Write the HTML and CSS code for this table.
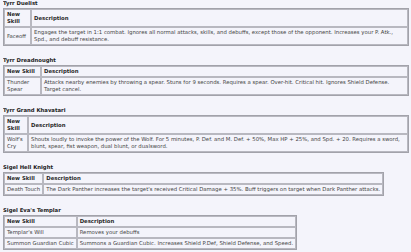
FILE: index.html
```html
<!DOCTYPE html>
<html lang="en">
<head>
<meta charset="utf-8">
<title>Skills</title>
<link rel="stylesheet" href="styles.css">
</head>
<body>
<section class="sec">
  <h3 class="title">Tyrr Duelist</h3>
  <table class="skills full">
    <tr><th class="c1 w27">New Skill</th><th>Description</th></tr>
    <tr><td>Faceoff</td><td>Engages the target in 1:1 combat. Ignores all normal attacks, skills, and debuffs, except those of the opponent. Increases your P. Atk., Spd., and debuff resistance.</td></tr>
  </table>
</section>
<section class="sec">
  <h3 class="title">Tyrr Dreadnought</h3>
  <table class="skills full">
    <tr><th class="c1 w37">New Skill</th><th>Description</th></tr>
    <tr><td>Thunder Spear</td><td>Attacks nearby enemies by throwing a spear. Stuns for 9 seconds. Requires a spear. Over-hit. Critical hit. Ignores Shield Defense. Target cancel.</td></tr>
  </table>
</section>
<section class="sec">
  <h3 class="title">Tyrr Grand Khavatari</h3>
  <table class="skills full">
    <tr><th class="c1 w24">New Skill</th><th>Description</th></tr>
    <tr><td>Wolf's Cry</td><td>Shouts loudly to invoke the power of the Wolf. For 5 minutes, P. Def. and M. Def. + 50%, Max HP + 25%, and Spd. + 20. Requires a sword, blunt, spear, fist weapon, dual blunt, or dualsword.</td></tr>
  </table>
</section>
<section class="sec">
  <h3 class="title">Sigel Hell Knight</h3>
  <table class="skills">
    <tr><th class="nw">New Skill</th><th>Description</th></tr>
    <tr><td class="nw">Death Touch</td><td class="nw">The Dark Panther increases the target's received Critical Damage + 35%. Buff triggers on target when Dark Panther attacks.</td></tr>
  </table>
</section>
<section class="sec">
  <h3 class="title">Sigel Eva's Templar</h3>
  <table class="skills">
    <tr><th class="nw">New Skill</th><th>Description</th></tr>
    <tr><td class="nw">Templar's Will</td><td class="nw">Removes your debuffs</td></tr>
    <tr><td class="nw">Summon Guardian Cubic</td><td class="nw">Summons a Guardian Cubic. Increases Shield P.Def, Shield Defense, and Speed.</td></tr>
  </table>
</section>
</body>
</html>
```
FILE: styles.css
```css
html {
  background: #f4f4fb;
}
body {
  margin: 0 2px 0 3px;
  font-family: "DejaVu Sans", Verdana, sans-serif;
  font-size: 5.35px;
  line-height: 7px;
  color: #444;
  background: #f4f4fb;
}
.sec {
  margin: 0 0 11px;
}
.title {
  margin: 0 0 1px;
  font-size: 5.3px;
  line-height: 7px;
  font-weight: bold;
  color: #222;
}
.skills {
  border: 1px solid #a2a2aa;
  border-collapse: separate;
  border-spacing: 0;
}
.full {
  width: 100%;
}
.skills th,
.skills td {
  border: 1px solid #b8b8c0;
  padding: 1px 2px;
  text-align: left;
  vertical-align: middle;
}
.skills th {
  font-weight: bold;
  color: #2a2a2a;
}
.c1 {
  box-sizing: border-box;
}
.w27 { width: 27px; }
.w37 { width: 37px; }
.w24 { width: 24px; }
.nw {
  white-space: nowrap;
}
```
